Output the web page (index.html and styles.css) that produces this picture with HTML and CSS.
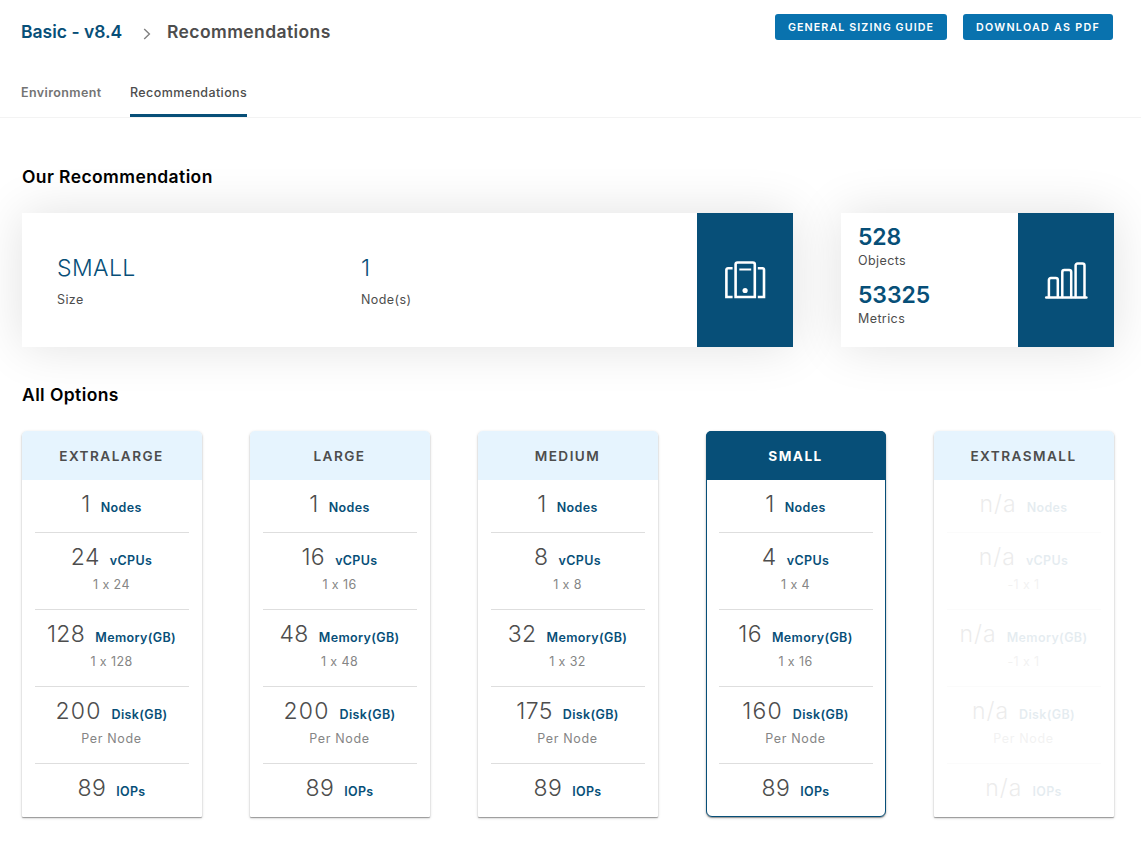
FILE: index.html
```html
<!DOCTYPE html>
<html lang="en">
<head>
<meta charset="utf-8">
<title>Recommendations</title>
<link rel="stylesheet" href="styles.css">
</head>
<body>
<header class="top">
  <nav class="crumbs">
    <a class="crumb-link">Basic - v8.4</a>
    <svg class="chevron" width="8" height="12" viewBox="0 0 8 12"><path d="M1.2 1 6.4 6 1.2 11" fill="none" stroke="#808080" stroke-width="1.4"/></svg>
    <span class="crumb-current">Recommendations</span>
  </nav>
  <div class="actions">
    <button class="btn guide">GENERAL SIZING GUIDE</button>
    <button class="btn pdf">DOWNLOAD AS PDF</button>
  </div>
</header>
<nav class="tabs">
  <a class="tab tab-env">Environment</a>
  <a class="tab tab-rec active">Recommendations</a>
</nav>
<main>
  <h2>Our Recommendation</h2>
  <section class="summary">
    <div class="panel panel-size">
      <div class="facts">
        <div class="fact"><div class="value">SMALL</div><div class="label">Size</div></div>
        <div class="fact"><div class="value">1</div><div class="label">Node(s)</div></div>
      </div>
      <div class="badge">
        <svg width="44" height="44" viewBox="0 0 44 44" fill="none" stroke="#fff" stroke-width="2.6">
          <path d="M12.6 39V6.5a2 2 0 0 1 2-2h15.2a2 2 0 0 1 2 2V39z"/>
          <path d="M9.6 10.2H5a1.6 1.6 0 0 0-1.6 1.6V39h6.2M34.8 10.2h4.6a1.6 1.6 0 0 1 1.6 1.6V39h-6.2"/>
          <path d="M16.3 11.5h11.9" stroke-width="2"/>
          <circle cx="22.1" cy="32.5" r="2.6" fill="#fff" stroke="none"/>
        </svg>
      </div>
    </div>
    <div class="panel panel-counts">
      <div class="counts">
        <div class="count">528</div><div class="label">Objects</div>
        <div class="count">53325</div><div class="label">Metrics</div>
      </div>
      <div class="badge">
        <svg width="44" height="44" viewBox="0 0 44 44" fill="none" stroke="#fff" stroke-width="2.5" stroke-linecap="round">
          <path d="M2.2 39.5h40.2"/>
          <path d="M4.9 39V22.1a2 2 0 0 1 2-2h4.9a2 2 0 0 1 2 2V39"/>
          <path d="M18.3 39V14.1a2 2 0 0 1 2-2h4.9a2 2 0 0 1 2 2V39"/>
          <path d="M31.6 39V7.5a2 2 0 0 1 2-2h4.9a2 2 0 0 1 2 2V39"/>
        </svg>
      </div>
    </div>
  </section>
  <h2>All Options</h2>
  <section class="options">
    <article class="card">
      <h3>EXTRALARGE</h3>
      <div class="rows">
        <div class="row"><p><b>1</b><em>Nodes</em></p></div>
        <div class="row"><p><b>24</b><em>vCPUs</em></p><small>1 x 24</small></div>
        <div class="row"><p><b>128</b><em>Memory(GB)</em></p><small>1 x 128</small></div>
        <div class="row"><p><b class="wide">200</b><em>Disk(GB)</em></p><small class="per">Per Node</small></div>
        <div class="row"><p><b>89</b><em>IOPs</em></p></div>
      </div>
    </article>
    <article class="card">
      <h3>LARGE</h3>
      <div class="rows">
        <div class="row"><p><b>1</b><em>Nodes</em></p></div>
        <div class="row"><p><b>16</b><em>vCPUs</em></p><small>1 x 16</small></div>
        <div class="row"><p><b>48</b><em>Memory(GB)</em></p><small>1 x 48</small></div>
        <div class="row"><p><b class="wide">200</b><em>Disk(GB)</em></p><small class="per">Per Node</small></div>
        <div class="row"><p><b>89</b><em>IOPs</em></p></div>
      </div>
    </article>
    <article class="card">
      <h3>MEDIUM</h3>
      <div class="rows">
        <div class="row"><p><b>1</b><em>Nodes</em></p></div>
        <div class="row"><p><b>8</b><em>vCPUs</em></p><small>1 x 8</small></div>
        <div class="row"><p><b>32</b><em>Memory(GB)</em></p><small>1 x 32</small></div>
        <div class="row"><p><b>175</b><em>Disk(GB)</em></p><small class="per">Per Node</small></div>
        <div class="row"><p><b>89</b><em>IOPs</em></p></div>
      </div>
    </article>
    <article class="card selected">
      <h3>SMALL</h3>
      <div class="rows">
        <div class="row"><p><b>1</b><em>Nodes</em></p></div>
        <div class="row"><p><b>4</b><em>vCPUs</em></p><small>1 x 4</small></div>
        <div class="row"><p><b>16</b><em>Memory(GB)</em></p><small>1 x 16</small></div>
        <div class="row"><p><b class="wide">160</b><em>Disk(GB)</em></p><small class="per">Per Node</small></div>
        <div class="row"><p><b>89</b><em>IOPs</em></p></div>
      </div>
    </article>
    <article class="card disabled">
      <h3>EXTRASMALL</h3>
      <div class="rows">
        <div class="row"><p><b>n/a</b><em>Nodes</em></p></div>
        <div class="row"><p><b>n/a</b><em>vCPUs</em></p><small>-1 x 1</small></div>
        <div class="row"><p><b>n/a</b><em>Memory(GB)</em></p><small>-1 x 1</small></div>
        <div class="row"><p><b>n/a</b><em>Disk(GB)</em></p><small class="per">Per Node</small></div>
        <div class="row"><p><b>n/a</b><em>IOPs</em></p></div>
      </div>
    </article>
  </section>
</main>
</body>
</html>
```

FILE: styles.css
```css
* { box-sizing: border-box; }
body {
  margin: 0;
  height: 847px;
  overflow: hidden;
  background: #fff;
  color: #4d4d4d;
  font-family: Inter, "Liberation Sans", sans-serif;
  font-size: 12.5px;
  font-feature-settings: "calt" 0;
  letter-spacing: 0.4px;
}
h2, h3, p { margin: 0; }

.top {
  display: flex;
  justify-content: space-between;
  height: 75px;
  padding: 14px 28px 0 21px;
}
.crumbs {
  display: flex;
  height: 34px;
  align-items: center;
  font-size: 17.5px;
  font-weight: 600;
  white-space: nowrap;
}
.crumb-link { width: 122px; color: #074f78; letter-spacing: 0; }
.chevron { width: 8px; margin: 6px 16px 0 0; }
.actions { display: flex; gap: 16px; }
.btn {
  height: 26px;
  padding: 1px 0 0;
  border: 0;
  border-radius: 3px;
  background: #0972ae;
  color: #fff;
  font: 600 10.7px/25px Inter, "Liberation Sans", sans-serif;
  white-space: nowrap;
}
.guide { width: 172px; letter-spacing: 1.1px; }
.pdf { width: 150px; letter-spacing: 1.3px; }

.tabs {
  display: flex;
  gap: 28px;
  height: 43px;
  padding-left: 21px;
  border-bottom: 1px solid #f3f3f3;
  font-weight: 500;
  white-space: nowrap;
}
.tab { height: 42px; line-height: 35px; color: #737373; font-weight: 600; }
.tab-env { width: 81px; }
.tab-rec { width: 117px; }
.tab.active { border-bottom: 3px solid #074f78; color: #4d4d4d; font-weight: 500; letter-spacing: 0.4px; }

main { padding: 46px 27px 0 22px; }
h2 {
  position: relative;
  z-index: 1;
  height: 26px;
  font-size: 17.5px;
  line-height: 26px;
  font-weight: 600;
  color: #000;
}

.summary { display: flex; gap: 48px; margin: 23px 0 35px; }
.panel {
  display: flex;
  height: 134px;
  background: #fff;
  box-shadow: 0 0 50px rgba(0, 0, 0, 0.12);
}
.panel-size { width: 771px; }
.panel-counts { width: 273px; }
.badge {
  display: flex;
  flex: none;
  width: 96px;
  align-items: center;
  justify-content: center;
  background: #074f78;
}
.facts { display: flex; flex: 1; padding: 39px 0 0 35px; }
.fact { width: 304px; }
.value { height: 32px; font-size: 23px; line-height: 33px; font-weight: 300; color: #074f78; }
.label { height: 16px; line-height: 16px; color: #4d4d4d; }
.facts .label { margin-top: 8px; }
.counts { flex: 1; padding: 9px 0 0 17px; }
.count { height: 31px; font-size: 23px; line-height: 30px; font-weight: 600; letter-spacing: -0.1px; color: #074f78; }
.counts .label { margin-bottom: 11px; }

.options { display: flex; gap: 48px; margin-top: 23px; }
.card {
  width: 180px;
  height: 386px;
  flex: none;
  border-radius: 5px 5px 1px 1px;
  background: #fff;
  box-shadow: 0 1px 3px rgba(0, 0, 0, 0.22), 0 1px 1px rgba(0, 0, 0, 0.3);
}
.card h3 {
  height: 49px;
  padding-right: 1px;
  border-radius: 5px 5px 0 0;
  background: #e6f4fe;
  text-align: center;
  font-size: 13.6px;
  line-height: 50px;
  font-weight: 600;
  letter-spacing: 1.45px;
}
.rows { padding: 0 13px; }
.row { height: 77px; padding-right: 1px; border-bottom: 1px solid #dedede; text-align: center; }
.row:first-child { height: 53px; }
.row:last-child { height: 53px; border: 0; }
.row p {
  display: flex;
  height: 48px;
  align-items: baseline;
  justify-content: center;
  line-height: 48px;
  white-space: nowrap;
}
.row b { margin-right: 10px; font-size: 23px; font-weight: 300; }
.row .wide { letter-spacing: 1.2px; }
.row em { font-style: normal; font-weight: 600; letter-spacing: 0.35px; color: #074f78; }
.row small { display: block; margin-top: -5px; font-size: 12.5px; line-height: 18px; color: #858585; }
.row .per { letter-spacing: 0.65px; }
.selected { border: 1px solid #074f78; border-radius: 6px; }
.selected h3 { margin: -1px -1px 0; background: #074f78; color: #fff; font-weight: 700; }
.selected .rows { padding: 0 12px; }
.disabled .rows { opacity: 0.1; }
.disabled b { letter-spacing: 1px; }
```
